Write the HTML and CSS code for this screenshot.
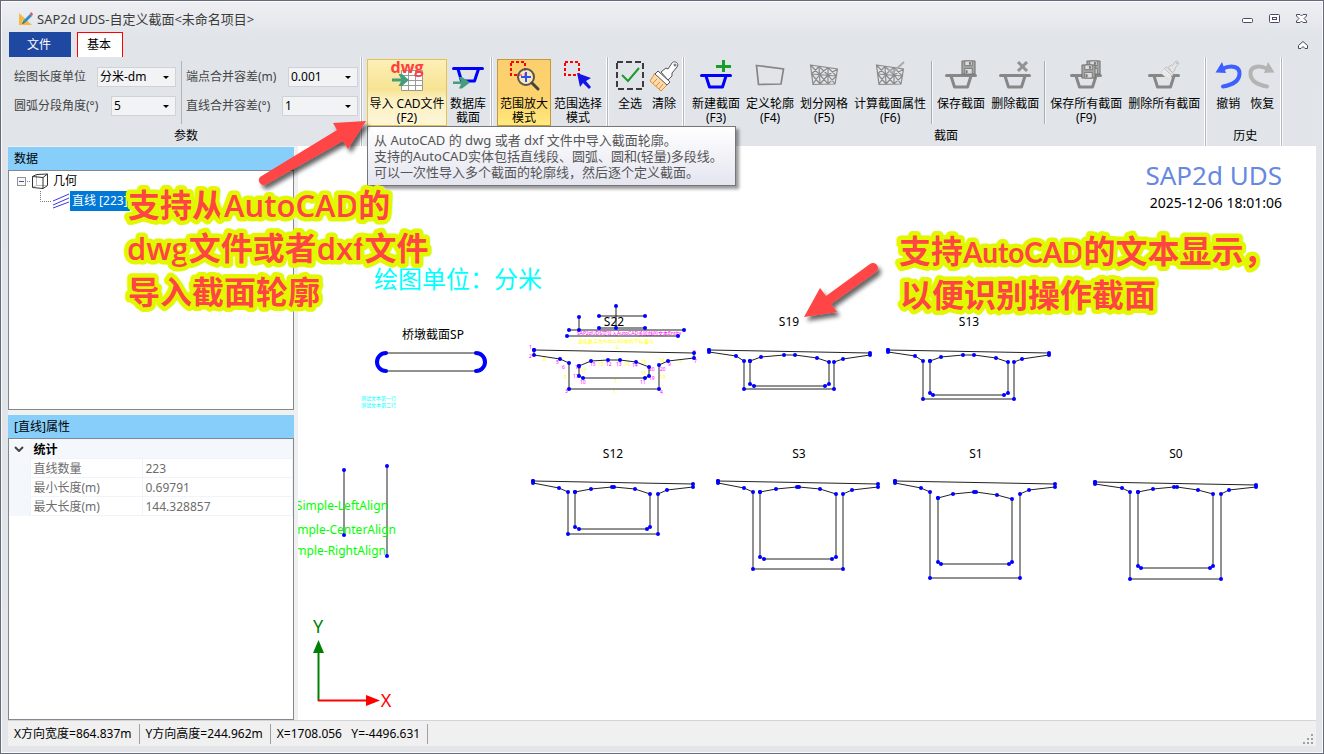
FILE: index.html
```html
<!DOCTYPE html>
<html lang="zh-CN">
<head>
<meta charset="utf-8">
<title>SAP2d UDS-自定义截面</title>
<link rel="stylesheet" href="styles.css">
</head>
<body>
<svg class="defs" aria-hidden="true">
  <defs>
    <symbol id="section" viewBox="0 0 32 32">
      <path d="M1.500 15.500H30.500M6 16L9.500 27H22.500L26 16" fill="none" stroke="currentColor" stroke-width="3" stroke-linecap="round" stroke-linejoin="round"/>
    </symbol>
    <symbol id="floppy" viewBox="0 0 16 16">
      <path d="M1 1H15V15H1Z" fill="#a4a4a4" stroke="#6f6f6f"/>
      <path d="M4 1H12V6H4ZM4 9H12V15H4Z" fill="#dcdcdc" stroke="#777"/>
      <path d="M9.500 2V5M6 11V14" stroke="#777" stroke-width="2"/>
    </symbol>
    <symbol id="mesh" viewBox="0 0 32 32">
      <path d="M2.500 5L29.500 9L27 24L5 24.500ZM3.500 14L28.500 16M11 6.500L12 24M20 7.500V24M2.500 5L11.500 14.500L5 24M11 6.500L3.500 14L12 24L20 15L27 24M11.500 14.500L20 7.500L28.500 16L20 24L11.500 14.500M20 15L29.500 9M11 6.500L20 15" fill="none" stroke="#8a8a8a" stroke-width="1.200"/>
    </symbol>
    <symbol id="brush" viewBox="0 0 32 32">
      <path class="brush-head" d="M7 13L20 24L13 31L2 21Z"/>
      <path class="brush-hair" d="M5 23L9 19M8 26L12 22M11 29L15 24" fill="none"/>
      <path class="brush-grip" d="M10 11L22 22L19 25L7 14Z"/>
      <path class="brush-grip" d="M13 12L18 8L20 9L24 3C26 0 32 3 29 7L24 13V16L20 20Z"/>
      <circle class="brush-grip" cx="27" cy="5" r="1"/>
    </symbol>
    <symbol id="undo" viewBox="0 0 32 32">
      <path d="M10 9C20 4 28 7 27.500 14C27 21 20 25 11 26.500" fill="none" stroke="currentColor" stroke-width="4" stroke-linecap="round"/>
      <path d="M3.500 12.500L10 2L14 13Z" fill="currentColor"/>
    </symbol>
    <symbol id="marquee" viewBox="0 0 32 32">
      <path d="M3 2H17V15H3Z" fill="none" stroke="#f00" stroke-width="2" stroke-dasharray="3 2"/>
    </symbol>
    <marker id="node" markerWidth="4" markerHeight="4" refX="2" refY="2" markerUnits="userSpaceOnUse"><circle cx="2" cy="2" r="2" fill="#00f"/></marker>
    <filter id="shadow" x="-20%" y="-20%" width="150%" height="150%"><feDropShadow dx="3" dy="4" stdDeviation="2" flood-color="#000" flood-opacity="0.6"/></filter>
  </defs>
</svg>

<div class="window">
  <header class="titlebar">
    <svg class="app-icon" viewBox="0 0 16 16"><path d="M1 2V14H14Z" fill="#f4b942"/><path d="M4 9V12H7Z" fill="#e4e6ea"/><path d="M5 10L12 3L14 5L7 12Z" fill="#2f8fc4"/><path d="M12 3L13 1L15 3L14 5Z" fill="#e34a4a"/><path d="M4 13L5 10L7 12Z" fill="#555"/></svg>
    <h1 class="title">SAP2d UDS-自定义截面&lt;未命名项目&gt;</h1>
    <div class="window-buttons">
      <button type="button" aria-label="最小化"><svg viewBox="0 0 12 12"><rect x="0.500" y="5.500" width="10" height="4" rx="1" fill="#fff" stroke="#4c4866"/></svg></button>
      <button type="button" aria-label="最大化"><svg viewBox="0 0 12 12"><rect x="0.500" y="1.500" width="10" height="8" rx="1" fill="#fff" stroke="#4c4866"/><rect x="3.500" y="4.500" width="4" height="2" fill="#fff" stroke="#4c4866"/></svg></button>
      <button type="button" aria-label="关闭"><svg viewBox="0 0 12 12"><path d="M0.500 1.500H4L5.500 3L7 1.500H10.500V3L8 5.500L10.500 8V9.500H7L5.500 8L4 9.500H0.500V8L3 5.500L0.500 3Z" fill="#fff" stroke="#4c4866"/></svg></button>
    </div>
  </header>

  <nav class="tabs">
    <button type="button" class="tab tab-file">文件</button>
    <button type="button" class="tab tab-active">基本</button>
    <button type="button" class="collapse" aria-label="折叠"><svg viewBox="0 0 10 8"><path d="M0.500 4.500L5 0.500L9.500 4.500V7.500H7L5 5.500L3 7.500H0.500Z" fill="#fff" stroke="#454a5c"/></svg></button>
  </nav>

  <div class="ribbon">
    <section class="group">
      <div class="params">
        <div class="param-col param-col-a">
          <div class="param"><label for="unit">绘图长度单位</label><span class="pick pick-79"><select id="unit"><option>分米-dm</option></select></span></div>
          <div class="param"><label for="arc">圆弧分段角度(°)</label><span class="pick pick-65"><select id="arc"><option>5</option></select></span></div>
        </div>
        <div class="param-col param-col-b">
          <div class="param"><label for="end">端点合并容差(m)</label><span class="pick pick-70"><select id="end"><option>0.001</option></select></span></div>
          <div class="param"><label for="line">直线合并容差(°)</label><span class="pick pick-76"><select id="line"><option>1</option></select></span></div>
        </div>
      </div>
      <h2 class="group-name">参数</h2>
    </section>

    <section class="group">
      <div class="tools">
        <div class="tip-anchor">
          <button type="button" class="tool tool-hover" aria-describedby="tip">
            <svg class="icon" viewBox="0 0 32 32"><path d="M10.500 10.500H31.500V30.500H10.500Z" fill="#fff" stroke="#999"/><path d="M10.500 15.500H31.500M10.500 20.500H31.500M10.500 25.500H31.500M17.500 10.500V30.500M24.500 10.500V30.500" stroke="#999"/><path d="M1 18.500H10L7.500 14H11L18 20L11 26H7.500L10 21.500H1Z" fill="#459d7c"/><text class="dwg" x="16" y="13">dwg</text></svg>
            <span>导入 CAD文件<br>(F2)</span>
          </button>
          <div class="tip" id="tip" role="tooltip">从 AutoCAD 的 dwg 或者 dxf 文件中导入截面轮廓。<br>支持的AutoCAD实体包括直线段、圆弧、圆和(轻量)多段线。<br>可以一次性导入多个截面的轮廓线，然后逐个定义截面。</div>
        </div>
        <button type="button" class="tool">
          <svg class="icon" viewBox="0 0 32 32"><path d="M1.500 8.500H30.500M6 9L9.500 21H22.500L26.500 9" fill="none" stroke="#00f" stroke-width="3" stroke-linecap="round" stroke-linejoin="round"/><path d="M1 21.500H9L7 17H10L18 22.500L10 28.500H7L9 24H1Z" fill="#459d7c"/></svg>
          <span>数据库<br>截面</span>
        </button>
      </div>
    </section>

    <section class="group">
      <div class="tools">
        <button type="button" class="tool tool-on" aria-pressed="true">
          <svg class="icon" viewBox="0 0 32 32"><use href="#marquee"/><circle cx="18" cy="17" r="8" fill="#fff" fill-opacity="0.500" stroke="#555" stroke-width="2"/><path d="M24 23L30 29" stroke="#444" stroke-width="3" stroke-linecap="round"/><path d="M13 17H23M18 12V22" stroke="#2a55f5" stroke-width="2"/></svg>
          <span>范围放大<br>模式</span>
        </button>
        <button type="button" class="tool">
          <svg class="icon" viewBox="0 0 32 32"><use href="#marquee"/><path d="M15 13L29 18L24 21L29 27L27 29L21 23L18 27Z" fill="#1414e6"/></svg>
          <span>范围选择<br>模式</span>
        </button>
      </div>
    </section>

    <section class="group">
      <div class="tools">
        <button type="button" class="tool tool-narrow">
          <svg class="icon" viewBox="0 0 32 32"><path d="M3 2H29V29H3Z" fill="none" stroke="#3c3c3c" stroke-width="2" stroke-dasharray="6 3"/><path d="M8 15L14 21L25 8" fill="none" stroke="#1e9a30" stroke-width="2"/></svg>
          <span>全选</span>
        </button>
        <button type="button" class="tool tool-narrow">
          <svg class="icon brush-color" viewBox="0 0 32 32"><use href="#brush"/></svg>
          <span>清除</span>
        </button>
      </div>
    </section>

    <section class="group">
      <div class="tools">
        <button type="button" class="tool">
          <svg class="icon icon-blue" viewBox="0 0 32 32"><use href="#section"/><path d="M16 6.500H31M23.500 0V12" stroke="#1a9c2c" stroke-width="3"/></svg>
          <span>新建截面<br>(F3)</span>
        </button>
        <button type="button" class="tool">
          <svg class="icon" viewBox="0 0 32 32"><path d="M2.500 5.500L29.500 9L27 24L4.500 24.500Z" fill="none" stroke="#858585" stroke-width="1.700"/></svg>
          <span>定义轮廓<br>(F4)</span>
        </button>
        <button type="button" class="tool">
          <svg class="icon" viewBox="0 0 32 32"><use href="#mesh"/></svg>
          <span>划分网格<br>(F5)</span>
        </button>
        <button type="button" class="tool">
          <svg class="icon" viewBox="0 0 32 32"><use href="#mesh"/><path d="M14 9L18 13L30 2" fill="none" stroke="#aaa" stroke-width="2"/></svg>
          <span>计算截面属性<br>(F6)</span>
        </button>
        <span class="divider"></span>
        <button type="button" class="tool">
          <svg class="icon icon-gray" viewBox="0 0 32 32"><use href="#section"/><use href="#floppy" x="16" y="0" width="15" height="15"/></svg>
          <span>保存截面</span>
        </button>
        <button type="button" class="tool">
          <svg class="icon icon-gray" viewBox="0 0 32 32"><use href="#section"/><path d="M19 2L28 11M28 2L19 11" stroke="#929292" stroke-width="3"/></svg>
          <span>删除截面</span>
        </button>
        <span class="divider"></span>
        <button type="button" class="tool">
          <svg class="icon icon-gray" viewBox="0 0 32 32"><use href="#section"/><use href="#floppy" x="16" y="0" width="15" height="15"/><use href="#floppy" x="11" y="4" width="15" height="15"/></svg>
          <span>保存所有截面<br>(F9)</span>
        </button>
        <button type="button" class="tool">
          <svg class="icon icon-gray brush-gray" viewBox="0 0 32 32"><use href="#section"/><use href="#brush" x="12" y="0" width="20" height="20"/></svg>
          <span>删除所有截面</span>
        </button>
      </div>
      <h2 class="group-name">截面</h2>
    </section>

    <section class="group">
      <div class="tools">
        <button type="button" class="tool tool-narrow">
          <svg class="icon icon-undo" viewBox="0 0 32 32"><use href="#undo"/></svg>
          <span>撤销</span>
        </button>
        <button type="button" class="tool tool-narrow">
          <svg class="icon icon-redo" viewBox="0 0 32 32"><g transform="matrix(-1 0 0 1 32 0)"><use href="#undo"/></g></svg>
          <span>恢复</span>
        </button>
      </div>
      <h2 class="group-name">历史</h2>
    </section>
  </div>

  <main class="workspace">
    <aside class="side">
      <section class="panel panel-data">
        <h2 class="panel-title">数据</h2>
        <div class="panel-body">
          <ul class="tree">
            <li class="node-root">
              <svg class="toggle" viewBox="0 0 14 16"><rect x="0.500" y="4.500" width="8" height="8" fill="#f8f8f8" stroke="#919191"/><path d="M2 8.500H7" stroke="#3a57a5"/><path d="M10 8.500H14" stroke="#888" stroke-dasharray="1 1"/></svg>
              <svg class="cube" viewBox="0 0 18 16"><path d="M5.500 1.500V12.500L1.500 14.500M5.500 12.500H16" fill="none" stroke="#bbb"/><path d="M1.500 3.500L12 4.500V15.500L1.500 14.500ZM1.500 3.500L5.500 1.500L16.500 1L12 4.500M16.500 1V12.500L12 15.500" fill="none" stroke="#333"/></svg>
              <span>几何</span>
            </li>
            <li class="node-leaf">
              <svg class="branch" viewBox="0 0 12 20"><path d="M0.500 0V10.500H12" fill="none" stroke="#777" stroke-dasharray="1 1"/></svg>
              <svg class="lines" viewBox="0 0 18 16"><path d="M1 8L17 1M1 12L17 5M1 15L17 9" stroke="#3a3ae0"/></svg>
              <span class="chosen">直线 [223]</span>
            </li>
          </ul>
        </div>
      </section>
      <section class="panel panel-props">
        <h2 class="panel-title">[直线]属性</h2>
        <div class="panel-body">
          <table class="props">
            <colgroup><col class="col-gutter"><col class="col-key"><col></colgroup>
            <tr class="props-head"><td class="gutter"><svg viewBox="0 0 10 6"><path d="M1 1L5 5L9 1" fill="none" stroke="#444" stroke-width="2"/></svg></td><th colspan="2">统计</th></tr>
            <tr><td class="gutter"></td><td>直线数量</td><td>223</td></tr>
            <tr><td class="gutter"></td><td>最小长度(m)</td><td>0.69791</td></tr>
            <tr><td class="gutter"></td><td>最大长度(m)</td><td>144.328857</td></tr>
          </table>
        </div>
      </section>
    </aside>

    <section class="canvas">
      <svg class="drawing">
        <g transform="translate(-298 -146)">
          <text class="cad-cyan cad-24" x="374" y="288">绘图单位：分米</text>
          <g class="cad-label">
            <text x="433" y="339">桥墩截面SP</text>
            <text x="614" y="326">S22</text><text x="789" y="326">S19</text><text x="969" y="326">S13</text>
            <text x="613" y="458">S12</text><text x="799" y="458">S3</text><text x="976" y="458">S1</text><text x="1176" y="458">S0</text>
          </g>
          <path class="outline" d="M386 353H476M386 371H476"/>
          <path class="arc" d="M386 353A9 9 0 0 0 386 371M476 353A9 9 0 0 1 476 371"/>
          <text class="cad-cyan cad-5" x="361" y="400">测试文本第一行</text>
          <text class="cad-cyan cad-5" x="361" y="407">测试文本第二行</text>

          <text class="cad-magenta cad-5" x="577" y="335">SAP2dUDS可导入AutoCAD多段线的文本Entity</text>
          <text class="cad-yellow cad-5" x="578" y="343">蓝色数字为AutoCAD中的下标番号</text>
          <g class="cad-yellow cad-5">
            <text x="616" y="349">2</text><text x="532" y="355">3</text><text x="543" y="361">8</text><text x="564" y="379">9</text><text x="613" y="394">1</text><text x="614" y="383">7</text><text x="660" y="379">19</text><text x="680" y="363">5</text><text x="659" y="362">12</text><text x="598" y="366">13</text><text x="624" y="366">14</text><text x="641" y="364">15</text><text x="581" y="373">17</text><text x="641" y="375">16</text>
          </g>
          <g class="cad-magenta cad-5">
            <text x="529" y="349">1</text><text x="529" y="358">2</text><text x="556" y="364">5</text><text x="562" y="369">6</text><text x="565" y="393">3</text><text x="660" y="394">4</text><text x="693" y="354">8</text><text x="694" y="363">7</text><text x="668" y="366">9</text><text x="660" y="371">20</text><text x="575" y="369">18</text><text x="590" y="366">15</text><text x="606" y="366">12</text><text x="616" y="366">13</text><text x="632" y="367">14</text><text x="649" y="371">20</text><text x="573" y="378">17</text><text x="580" y="384">10</text><text x="640" y="384">11</text><text x="649" y="380">19</text>
          </g>
          <g class="outline nodes">
            <path d="M616 306V328M599 316H645M599 328H645M579 317V330M569 330H684M567 336H678"/>
            <path d="M534 350L694 353V358L668 361L659 365V389H569V363L560 359L534 355Z"/>
            <path d="M579 366L591 361L608 360H620L636 362L649 367V376L645 378H583L579 376Z"/>
            <path d="M709 350L870 353V355L843 359L834 362V389H744V361L736 356L709 352Z"/>
            <path d="M750 361L761 357L784 355H795L817 358L829 362V384L825 386H754L750 384Z"/>
            <path d="M888 350L1049 353V355L1022 359L1014 362V399H923V361L915 356L888 352Z"/>
            <path d="M930 361L941 357L963 355H974L996 358L1008 362V393L1004 395H933L930 393Z"/>
            <path d="M533 481L693 484V487L667 490L658 494V534H568V492L559 488L533 483Z"/>
            <path d="M575 492L591 489L612 487H614L635 489L650 494V527L647 529H579L575 527Z"/>
            <path d="M718 481L878 484V487L852 490L843 494V569H753V492L744 488L718 483Z"/>
            <path d="M760 492L776 489L797 487H799L820 489L836 494V557L832 559H764L760 557Z"/>
            <path d="M895 481L1055 484V487L1029 490L1020 494V578H930V492L921 488L895 483Z"/>
            <path d="M938 498L953 494L974 492H976L997 495L1012 499V562L1009 564H941L938 562Z"/>
            <path d="M1095 482L1256 485V487L1229 490L1221 494V579H1130V492L1122 488L1095 484Z"/>
            <path d="M1138 492L1153 489L1174 487H1177L1198 490L1213 494V566L1210 568H1141L1138 566Z"/>
            <path d="M344 470V535M387 466V556"/>
          </g>
          <g class="cad-green">
            <text x="388" y="510">Simple-LeftAlign</text>
            <text x="396" y="534">Simple-CenterAlign</text>
            <text x="386" y="555">Simple-RightAlign</text>
          </g>
          <path d="M318.500 701V652" stroke="#008000" stroke-width="2"/><path d="M313 653L318.500 640L324 653Z" fill="#008000"/>
          <path d="M318 700.500H367" stroke="#f00" stroke-width="2"/><path d="M366 695L380 700.500L366 706Z" fill="#f00"/>
          <text class="axis axis-y" x="318" y="633">Y</text><text class="axis axis-x" x="386" y="707">X</text>
        </g>
      </svg>
      <div class="stamp"><p class="stamp-name">SAP2d UDS</p><p class="stamp-time">2025-12-06 18:01:06</p></div>
    </section>
  </main>

  <footer class="status">
    <span>X方向宽度=864.837m</span><span>Y方向高度=244.962m</span><span>X=1708.056&nbsp;&nbsp; Y=-4496.631</span>
    <svg class="grip" viewBox="0 0 11 11"><path d="M8 0H10V2H8ZM4 4H6V6H4ZM8 4H10V6H8ZM0 8H2V10H0ZM4 8H6V10H4ZM8 8H10V10H8Z" fill="#a0a0a0"/></svg>
  </footer>
</div>

<svg class="callouts">
  <g fill="#ff4444" filter="url(#shadow)">
    <path d="M260 177L337 130L333 123L366 121L348 149L343 141L265 185A5 5 0 0 1 260 177Z"/>
    <path d="M870 264L826 296L820 288L804 317L837 312L831 304L876 272A5 5 0 0 0 870 264Z"/>
  </g>
  <g class="note">
    <text x="128" y="217">支持从<tspan class="latin">AutoCAD</tspan>的</text>
    <text x="127" y="260"><tspan class="latin">dwg</tspan>文件或者<tspan class="latin">dxf</tspan>文件</text>
    <text x="128" y="304">导入截面轮廓</text>
  </g>
  <g class="note">
    <text x="899" y="263">支持<tspan class="latin-b">AutoCAD</tspan>的文本显示，</text>
    <text x="900" y="307">以便识别操作截面</text>
  </g>
</svg>
</body>
</html>
```

FILE: styles.css
```css
* { box-sizing: border-box; }
body {
  margin: 0;
  font: 12px/14px "Noto Sans", "Noto Sans CJK SC", sans-serif;
  color: #000;
}
h1, h2, p, ul { margin: 0; padding: 0; font-size: 12px; font-weight: 400; }
button, select { font: inherit; color: inherit; border: 0; padding: 0; background: none; }
.defs { position: absolute; width: 0; height: 0; }

.window {
  height: 100vh;
  min-height: 480px;
  display: flex;
  flex-direction: column;
  border: 1px solid #646b7a;
  box-shadow: inset 0 0 0 1px #fafafc;
  padding: 1px 7px 7px;
  background: linear-gradient(#eeeff3, #e1e5e9 34px, #e3e5e8);
  overflow: hidden;
}

.titlebar { display: flex; align-items: center; height: 30px; padding: 3px 8px 0 10px; }
.app-icon { width: 16px; height: 16px; margin-right: 3px; }
.title { flex: 1; color: #3c3c3c; font-size: 13px; line-height: 18px; }
.window-buttons { display: flex; gap: 15px; }
.window-buttons button { width: 12px; height: 12px; }
.window-buttons svg { display: block; width: 12px; height: 12px; }

.tabs { display: flex; height: 25px; padding-left: 1px; gap: 6px; }
.tab-file { width: 62px; padding-right: 2px; background: #1f48a3; color: #fff; }
.tab-active { width: 46px; padding-right: 2px; background: #fff; border: 1px solid #f00; border-bottom: 0; }
.collapse { margin-left: auto; width: 10px; margin-right: 8px; }
.collapse svg { display: block; width: 10px; height: 8px; }

.ribbon { display: flex; height: 89px; background: #e1e5e9; }
.group {
  display: flex;
  flex-direction: column;
  border-right: 1px solid #b4b8bc;
  box-shadow: inset -1px 0 #fff, 1px 0 #f6f7f8;
  padding: 2px 2px 0 5px;
}
.group-name { margin-top: auto; text-align: center; height: 17px; }

.params { display: flex; padding-top: 2px; }
.param-col { display: flex; flex-direction: column; gap: 9px; padding-top: 6px; height: 63px; }
.param-col-a { width: 169px; padding-left: 1px; padding-right: 5px; border-right: 1px solid #b0b4b8; }
.param-col-b { width: 177px; padding-left: 4px; padding-right: 1px; }
.param { display: flex; align-items: center; justify-content: space-between; height: 20px; color: #444; white-space: nowrap; }
.pick { position: relative; height: 20px; border: 1px solid #cfd2d6; background: #f2f3f4; color: #000; }
.pick::after {
  content: "";
  position: absolute;
  right: 6px;
  top: 8px;
  border: 3px solid transparent;
  border-top-color: #000;
  pointer-events: none;
}
.pick select { appearance: none; width: 100%; height: 18px; padding-left: 2px; line-height: 18px; }
.pick-79 { width: 79px; }
.pick-65 { width: 65px; }
.pick-70 { width: 70px; }
.pick-76 { width: 76px; }

.tools { display: flex; align-items: flex-start; }
.tool {
  display: flex;
  flex-direction: column;
  align-items: center;
  gap: 5px;
  height: 67px;
  padding: 0 2px;
  border: 1px solid transparent;
  white-space: nowrap;
  text-align: center;
}
.tool-narrow { padding: 0; }
.icon { display: block; width: 32px; height: 32px; flex: none; overflow: visible; }
.tool-hover { border-color: #e6c34a; background: linear-gradient(#fdf0b8, #f7e392 45%, #fbf0c0 60%, #fdf6d8); width: 80px; padding: 0; }
.tool-on { border-color: #c29a3a; background: linear-gradient(#fccf6e, #fdd36d 60%, #ffea7e); }
.divider { width: 1px; height: 63px; margin: 2px 2px 0; background: #a9adb1; box-shadow: 1px 0 #f6f7f8; }
.icon-blue { color: #00f; }
.icon-gray { color: #878787; }
.icon-undo { color: #3e60ff; }
.icon-redo { color: #b4b4b4; }
.dwg { font: 700 16px "Open Sans", sans-serif; fill: #ff4040; text-anchor: middle; }
.brush-color { --hair: #ffd9a6; --hair-line: #d8913d; --grip: #fff; --grip-line: #555; }
.brush-gray { --hair: #eee; --hair-line: #ccc; --grip: #e4e4e4; --grip-line: #aaa; }
.brush-head { fill: var(--hair); stroke: var(--hair-line); }
.brush-hair { stroke: var(--hair-line); }
.brush-grip { fill: var(--grip); stroke: var(--grip-line); }

.tip-anchor { position: relative; }
.tip {
  position: absolute;
  left: 0;
  top: 67px;
  z-index: 5;
  padding: 5px 12px 5px 6px;
  border: 1px solid #767676;
  background: linear-gradient(#fff, #e4e5f0);
  box-shadow: 3px 3px 3px rgba(0, 0, 0, 0.4);
  color: #555;
  font-size: 13px;
  line-height: 16px;
  white-space: nowrap;
}

.workspace { flex: 1; min-height: 0; display: flex; gap: 4px; background: #f0f0f0; }
.side { width: 286px; display: flex; flex-direction: column; gap: 5px; padding-top: 1px; }
.panel { display: flex; flex-direction: column; }
.panel-data { flex: 263 1 0; }
.panel-props { flex: 305 1 0; }
.panel-title { height: 23px; padding-left: 6px; line-height: 23px; background: #87cefa; }
.panel-body { flex: 1; background: #fff; border: 1px solid #828790; }

.tree { list-style: none; line-height: 20px; }
.node-root { display: flex; align-items: center; height: 20px; padding-left: 8px; }
.toggle { width: 14px; height: 16px; }
.cube { width: 18px; height: 16px; margin-right: 4px; }
.node-leaf { display: flex; align-items: center; height: 20px; padding-left: 31px; }
.branch { width: 12px; height: 20px; }
.lines { width: 18px; height: 16px; }
.chosen { padding: 0 2px; background: #0078d7; color: #fff; }

.props { width: 100%; border-collapse: collapse; color: #6d6d6d; table-layout: fixed; }
.props td, .props th { height: 19px; padding: 1px 3px 0; border: 1px solid #f0f3fa; line-height: 16px; }
.props .gutter { background: #f4f7fc; border: 0; padding: 0 5px; }
.col-gutter { width: 21px; }
.col-key { width: 112px; }
.props th { text-align: left; color: #000; font-weight: 700; }
.props-head { background: #f4f7fc; }
.gutter svg { display: block; width: 10px; height: 6px; }

.canvas { position: relative; flex: 1; background: #fff; overflow: hidden; }
.drawing { position: absolute; inset: 0; width: 100%; height: 100%; }
.outline { fill: none; stroke: #222; }
.nodes path { marker: url(#node); }
.arc { fill: none; stroke: #00f; stroke-width: 4; stroke-linecap: round; }
.cad-label { text-anchor: middle; }
.cad-24 { font-size: 24px; }
.cad-5 { font-size: 5px; }
.cad-cyan { fill: #0ff; }
.cad-yellow { fill: #ff0; }
.cad-magenta { fill: #f0f; }
.cad-green { fill: #0f0; text-anchor: end; }
.axis { font-size: 18px; text-anchor: middle; }
.axis-y { fill: #008000; }
.axis-x { fill: #f00; }
.stamp { position: relative; padding: 13px 34px 0 0; text-align: right; }
.stamp-name { font-size: 26px; line-height: 32px; color: #6688e0; }
.stamp-time { font-size: 14px; line-height: 24px; }

.status { display: flex; height: 26px; border-top: 1px solid #d4d4d4; background: #f0f0f0; align-items: center; }
.status span { padding: 0 7px 0 6px; line-height: 20px; border-right: 1px solid #a0a0a0; white-space: nowrap; }
.grip { width: 11px; height: 11px; margin: 11px 2px 0 auto; }

.callouts { position: absolute; left: 0; top: 0; width: 100%; height: 100%; pointer-events: none; z-index: 10; }
.note {
  font: 600 32px "Open Sans", "Noto Sans CJK SC", sans-serif;
  fill: #ff4444;
  stroke: #e2f800;
  stroke-width: 9px;
  stroke-linejoin: round;
  paint-order: stroke;
}
.latin { font-size: 31px; }
.latin-b { font-size: 28px; font-weight: 700; font-family: Lato, sans-serif; }
```
